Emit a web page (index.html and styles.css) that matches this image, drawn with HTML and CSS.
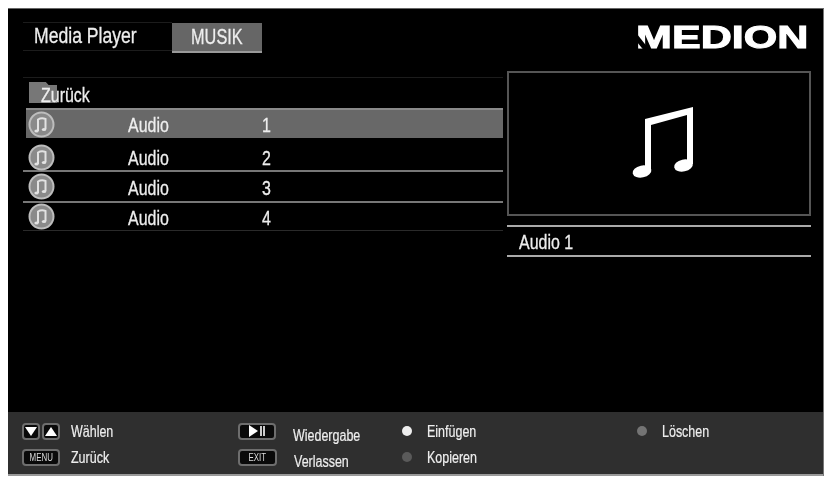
FILE: index.html
```html
<!DOCTYPE html>
<html lang="de">
<head>
    <meta charset="UTF-8">
    <meta name="viewport" content="width=device-width, initial-scale=1.0">
    <title>Media Player</title>
    <link rel="stylesheet" href="styles.css">
</head>
<body>
    <svg class="defs" width="0" height="0">
        <symbol id="disc" viewBox="0 0 27 27">
            <circle cx="13.5" cy="13.5" r="12" fill="#8a8a8a" stroke="#bdbdbd" stroke-width="2"/>
            <path d="M10 20V8.5q3.5-2 7.5-0.5V18" fill="none" stroke="#e2e2e2" stroke-width="2"/>
            <ellipse cx="8.5" cy="20" rx="2.2" ry="1.6" fill="#e2e2e2"/>
            <ellipse cx="16" cy="18.5" rx="2.2" ry="1.6" fill="#e2e2e2"/>
        </symbol>
    </svg>
    <div class="screen">
        <div class="top">
            <div class="heading">
                <span class="title"><span class="cond-wide">Media Player</span></span>
                <span class="tab"><span class="cond-mid">MUSIK</span></span>
            </div>
            <div class="logo"><span class="logo-text">MEDION</span><span class="logo-cut"></span></div>
        </div>
        <div class="main">
            <div class="list">
                <div class="back"><span class="folder"></span><span class="back-text cond">Zurück</span></div>
                <div class="row row-active"><svg class="disc"><use href="#disc"/></svg><span class="name"><span class="cond">Audio</span></span><span class="cond">1</span></div>
                <div class="row row-line row-two"><svg class="disc"><use href="#disc"/></svg><span class="name"><span class="cond">Audio</span></span><span class="cond">2</span></div>
                <div class="row row-line row-three"><svg class="disc"><use href="#disc"/></svg><span class="name"><span class="cond">Audio</span></span><span class="cond">3</span></div>
                <div class="row row-faint"><svg class="disc"><use href="#disc"/></svg><span class="name"><span class="cond">Audio</span></span><span class="cond">4</span></div>
            </div>
            <div class="side">
                <div class="preview">
                    <svg class="note" viewBox="0 0 66 76">
                        <path d="M15 64V13L63 1V58H57V9L21 19V64Z" fill="#fff"/>
                        <ellipse cx="12" cy="65.5" rx="9.5" ry="6" fill="#fff" transform="rotate(-12 12 65.5)"/>
                        <ellipse cx="53.5" cy="59.5" rx="9.5" ry="6" fill="#fff" transform="rotate(-12 53.5 59.5)"/>
                    </svg>
                </div>
                <div class="track"><span class="cond">Audio 1</span></div>
            </div>
        </div>
        <div class="bottom">
            <div class="keys keys-nav">
                <div class="key-row">
                    <span class="key-pair">
                        <span class="key key-square"><span class="arrow-down"></span></span>
                        <span class="key key-square"><span class="arrow-up"></span></span>
                    </span>
                    <span class="hint">Wählen</span>
                </div>
                <div class="key-row">
                    <span class="key key-menu"><span class="key-text">MENU</span></span>
                    <span class="hint">Zurück</span>
                </div>
            </div>
            <div class="keys keys-play">
                <div class="key-row">
                    <span class="key key-wide"><span class="play"></span><span class="pause"></span></span>
                    <span class="hint hint-low">Wiedergabe</span>
                </div>
                <div class="key-row">
                    <span class="key key-wide"><span class="key-text">EXIT</span></span>
                    <span class="hint hint-low">Verlassen</span>
                </div>
            </div>
            <div class="keys keys-edit">
                <div class="key-row"><span class="dot dot-on"></span><span class="hint">Einfügen</span></div>
                <div class="key-row"><span class="dot dot-dim"></span><span class="hint">Kopieren</span></div>
            </div>
            <div class="keys keys-del">
                <div class="key-row"><span class="dot dot-mid"></span><span class="hint">Löschen</span></div>
            </div>
        </div>
    </div>
</body>
</html>
```

FILE: styles.css
```css
*{
    margin: 0; padding: 0;
    box-sizing: border-box;
}
html, body{
    height: 100%;
    background: white;
}
body{
    padding: 8px 5px 3px 8px;
    font-family: "Liberation Sans", sans-serif;
    color: #eee;
    overflow: hidden;
}
.defs{
    position: absolute;
}
.screen{
    height: 100%;
    background: black;
    display: flex;
    flex-direction: column;
    border-right: 1px solid #777;
    border-top: 1px solid #666;
    filter: blur(.45px);
}
/* no condensed face installed, so the text is squeezed */
.cond, .cond-mid, .cond-wide, .hint, .key-text{
    display: inline-block;
    white-space: nowrap;
    transform-origin: left center;
    transform: scaleX(.76);
    -webkit-text-stroke: .3px currentColor;
}
.cond-wide{
    transform: scaleX(.8);
}
.cond-mid{
    transform: scaleX(.74);
    transform-origin: center;
}
.top{
    height: 61px;
    display: flex;
    justify-content: space-between;
    padding: 13px 17px 0 15px;
}
.heading{
    display: flex;
    align-items: flex-start;
}
.title{
    width: 149px;
    height: 29px;
    padding-left: 11px;
    font-size: 22px;
    line-height: 25px;
    border-top: 1px solid #1c1c1c;
    border-bottom: 1px solid #1c1c1c;
}
.tab{
    width: 90px;
    height: 30px;
    margin-top: 1px;
    background: #666;
    border-bottom: 2px solid #999;
    display: flex;
    justify-content: center;
    font-size: 22px;
    line-height: 28px;
}
.logo{
    position: relative;
    height: 24px;
    margin-top: 4px;
    width: 170px;
}
.logo-text{
    display: inline-block;
    font-weight: bold;
    font-size: 31px;
    line-height: 24px;
    color: white;
    -webkit-text-stroke: 1px white;
    transform: scaleX(1.39);
    transform-origin: left center;
    white-space: nowrap;
}
.logo-cut{
    position: absolute;
    left: 0;
    top: 1px;
    width: 22px;
    height: 23px;
    background: black;
    clip-path: polygon(0 25%, 62% 100%, 34% 100%, 0 60%);
}
.main{
    flex: 1;
    display: flex;
    padding-left: 15px;
    padding-right: 12px;
    gap: 4px;
}
.list{
    width: 480px;
    padding-top: 7px;
    margin-top: 7px;
    border-top: 1px solid #1c1c1c;
}
.back{
    height: 24px;
    position: relative;
    padding-left: 18px;
    font-size: 21px;
    line-height: 19px;
}
.folder{
    position: absolute;
    left: 6px;
    top: -3px;
    width: 28px;
    height: 21px;
    background: #777;
    clip-path: polygon(0 0, 60% 0, 70% 14%, 100% 14%, 100% 100%, 0 100%);
}
.back-text{
    position: relative;
}
.row{
    display: flex;
    align-items: center;
    height: 30px;
    padding-left: 5px;
    font-size: 21px;
    border-bottom: 1px solid #2a2a2a;
}
.row .cond{
    margin-top: 2px;
}
.row-active{
    margin-top: -1px;
    margin-left: 3px;
    padding-left: 2px;
    background: #686868;
    border-top: 2px solid #8a8a8a;
    border-bottom: none;
}
.row-two{
    height: 34px;
    padding-top: 6px;
}
.row-three{
    height: 31px;
}
.row-line{
    border-bottom: 2px solid #777;
}
.row-faint{
    height: 28px;
}
.disc{
    width: 27px;
    height: 27px;
}
.name{
    margin-left: 73px;
    width: 134px;
}
.side{
    flex: 1;
    padding-top: 1px;
}
.preview{
    height: 145px;
    border: 2px solid #555;
    display: flex;
    align-items: center;
    justify-content: center;
}
.note{
    width: 66px;
    height: 76px;
    margin-left: 7px;
}
.track{
    margin-top: 9px;
    height: 32px;
    padding-left: 12px;
    border-top: 2px solid #aaa;
    border-bottom: 2px solid #aaa;
    font-size: 21px;
    line-height: 30px;
}
.bottom{
    height: 64px;
    background: #2f2f2f;
    border-bottom: 2px solid #999;
    display: flex;
    padding-top: 7px;
}
.keys{
    display: flex;
    flex-direction: column;
    gap: 2px;
}
.keys-nav{
    width: 230px;
    padding-left: 14px;
}
.keys-play{
    width: 141px;
}
.keys-edit{
    width: 258px;
    padding-left: 23px;
}
.key-row{
    display: flex;
    align-items: center;
    height: 24px;
}
.hint{
    font-size: 16px;
    transform: scaleX(.78);
    margin-top: 2px;
    -webkit-text-stroke: .2px currentColor;
}
.hint-low{
    margin-top: 10px;
}
.key{
    display: flex;
    align-items: center;
    justify-content: center;
    background: #0a0a0a;
    border: 2px solid #6e6e6e;
    border-radius: 4px;
    height: 17px;
}
.key-pair{
    display: flex;
    gap: 2px;
    margin-right: 11px;
}
.key-square{
    width: 18px;
}
.key-menu{
    width: 38px;
    margin-right: 11px;
}
.key-wide{
    width: 39px;
    margin-right: 17px;
    gap: 2px;
}
.key-text{
    font-size: 11px;
    color: #ddd;
    transform: scaleX(.72);
    transform-origin: center;
    margin: 0 -4px;
    -webkit-text-stroke: 0;
}
.arrow-down{
    width: 0; height: 0;
    border-left: 6px solid transparent;
    border-right: 6px solid transparent;
    border-top: 9px solid white;
}
.arrow-up{
    width: 0; height: 0;
    border-left: 6px solid transparent;
    border-right: 6px solid transparent;
    border-bottom: 9px solid white;
}
.play{
    width: 0; height: 0;
    border-top: 6px solid transparent;
    border-bottom: 6px solid transparent;
    border-left: 9px solid white;
}
.pause{
    width: 5px;
    height: 10px;
    border-left: 2px solid #ccc;
    border-right: 2px solid #ccc;
}
.dot{
    width: 10px;
    height: 10px;
    border-radius: 50%;
    margin-right: 15px;
}
.dot-on{
    background: #eee;
}
.dot-dim{
    background: #5a5a5a;
}
.dot-mid{
    background: #747474;
}
```
